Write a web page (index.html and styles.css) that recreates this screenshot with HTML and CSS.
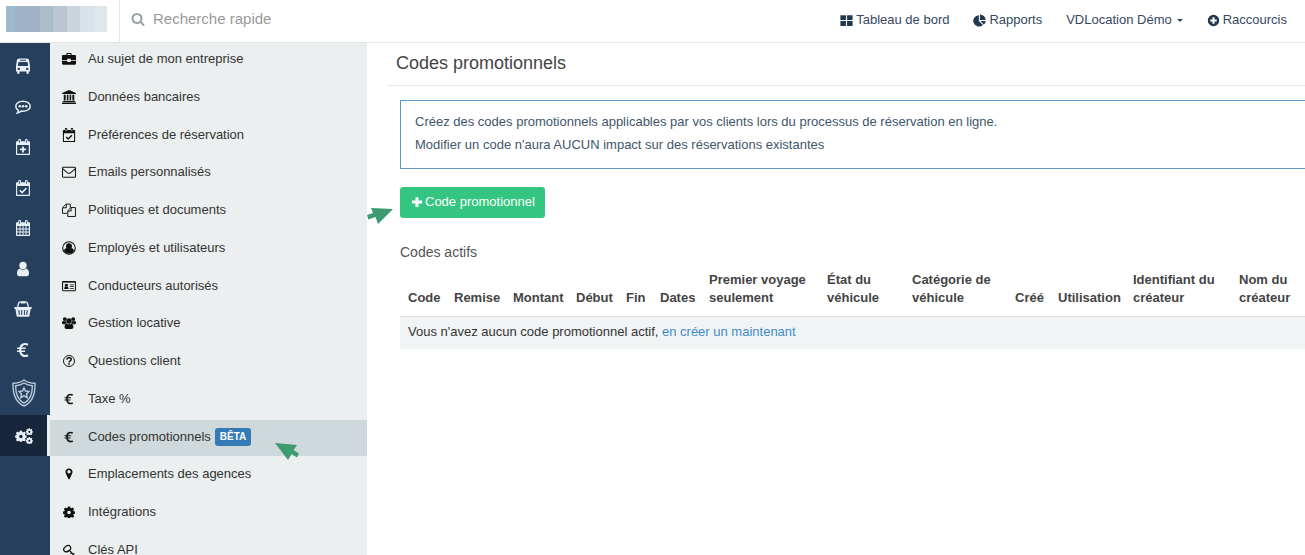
FILE: index.html
```html
<!DOCTYPE html>
<html lang="fr">
<head>
<meta charset="utf-8">
<title>Codes promotionnels</title>
<link rel="stylesheet" href="styles.css">
</head>
<body>
<svg class="sprite" aria-hidden="true">
  <symbol id="search" viewBox="0 0 1792 1792"><path d="M1216 832q0-185-131.500-316.500t-316.500-131.500-316.500 131.500-131.500 316.500 131.500 316.500 316.500 131.500 316.500-131.500 131.500-316.500zm512 832q0 52-38 90t-90 38q-54 0-90-38l-343-342q-179 124-399 124-143 0-273.500-55.500t-225-150-150-225-55.500-273.500 55.500-273.500 150-225 225-150 273.500-55.500 273.500 55.500 225 150 150 225 55.500 273.500q0 220-124 399l343 343q37 37 37 90z"/></symbol>
  <symbol id="grid" viewBox="0 0 16 16"><path d="M.5 1.500h6.800v6H.5zM8.700 1.500h6.800v6H8.700zM.5 8.700h6.800v6H.5zM8.700 8.700h6.800v6H8.700z"/></symbol>
  <symbol id="pie" viewBox="0 0 16 16"><path d="M7.200 1.500V8.500l5 5A7 7 0 1 1 7.200 1.500zM8.500.6a6.900 6.900 0 0 1 7 6.800h-7zM9.300 8.600h6.300a6.900 6.900 0 0 1-2.200 4.600z"/></symbol>
  <symbol id="pluscircle" viewBox="0 0 16 16"><path fill-rule="evenodd" d="M8 1a7 7 0 1 1 0 14A7 7 0 0 1 8 1zM6.700 4v2.700H4v2.600h2.700V12h2.600V9.300H12V6.700H9.300V4z"/></symbol>
  <symbol id="plus" viewBox="0 0 16 16"><path d="M6 1.500h4V6h4.700v4H10v4.700H6V10H1.300V6H6z"/></symbol>
  <symbol id="bus" viewBox="0 0 16 16"><path fill-rule="evenodd" d="M4.500.5h7c1.700 0 2.400.8 2.700 2.300L15 8v5.500h-1.200V15c0 1.300-2.300 1.300-2.300 0v-1.500h-7V15c0 1.300-2.300 1.300-2.300 0v-1.500H1V8l.8-5.200C2.100 1.300 2.800.5 4.500.5zM5 1.700v1h6v-1zM3.500 4l-.6 4h10.200l-.6-4zM3.800 9.700a1.200 1.200 0 1 0 0 2.400 1.200 1.200 0 0 0 0-2.400zM12.200 9.700a1.200 1.200 0 1 0 0 2.400 1.200 1.200 0 0 0 0-2.400z"/></symbol>
  <symbol id="comment" viewBox="0 0 16 16"><path fill="none" stroke="currentColor" stroke-width="1.500" d="M8 2.200c4 0 7.200 2.200 7.200 5s-3.200 5-7.200 5c-.6 0-1.200 0-1.700-.1-1.200 1-2.500 1.600-4 1.900.6-.8.900-1.600 1-2.600C1.700 10.500.8 9 .8 7.200c0-2.800 3.200-5 7.200-5z"/><circle cx="4.800" cy="7.200" r="1.300"/><circle cx="8" cy="7.200" r="1.300"/><circle cx="11.200" cy="7.200" r="1.300"/></symbol>
  <symbol id="calbase" viewBox="0 0 16 16"><path fill-rule="evenodd" d="M2 2.200h1.300V1c0-1.200 2.700-1.200 2.700 0v1.200h4V1c0-1.200 2.700-1.200 2.700 0v1.200H14c.6 0 1 .4 1 1V15c0 .6-.4 1-1 1H2c-.6 0-1-.4-1-1V3.200c0-.6.400-1 1-1zM2.200 6v8.800h11.600V6zM4.200 1.200v2.600h.9V1.200zM10.900 1.200v2.600h.9V1.200z"/></symbol>
  <symbol id="calplus" viewBox="0 0 16 16"><use href="#calbase"/><path d="M7.100 7.400h1.800v2.200h2.200v1.700H8.900v2.200H7.100v-2.200H4.900V9.600h2.200z"/></symbol>
  <symbol id="calcheck" viewBox="0 0 16 16"><use href="#calbase"/><path fill="none" stroke="currentColor" stroke-width="1.600" d="M4.800 10.300l2.300 2.300 4.200-4.300"/></symbol>
  <symbol id="cal" viewBox="0 0 16 16"><use href="#calbase"/><path fill="none" stroke="currentColor" d="M5 6v9M8 6v9M11 6v9M2 9h12M2 12h12"/></symbol>
  <symbol id="user" viewBox="0 0 16 16"><circle cx="8" cy="4.500" r="3.700"/><path d="M4.800 7.500c2 1.800 4.400 1.800 6.400 0 2 .5 2.800 2.500 2.800 5 0 1.700-.9 2.700-2.300 2.700H4.300C2.900 15.200 2 14.200 2 12.500c0-2.500.8-4.500 2.800-5z"/></symbol>
  <symbol id="basket" viewBox="0 0 18 16"><path fill="none" stroke="currentColor" stroke-width="1.300" d="M3.300 7l1.400-5c.2-.6.5-.8 1-.8h6.600c.5 0 .8.200 1 .8l1.400 5"/><path d="M6.800.3h4.400v2.200H6.800z"/><path fill-rule="evenodd" d="M.8 6h16.400c.8 0 .8 1.900 0 1.900h-.6L15.400 15c-.1.500-.4.800-.9.800h-11c-.5 0-.8-.3-.9-.8L1.400 7.900H.8c-.8 0-.8-1.900 0-1.900zM4.300 9l.5 5h1l-.4-5zM7.200 9v5h1V9zM9.900 9v5h1V9zM12.700 9l-.4 5h1l.5-5z"/></symbol>
  <symbol id="euro" viewBox="0 0 16 16"><path fill="none" stroke="currentColor" stroke-width="2.200" d="M13 2.800C8.800.700 5.200 3 5.200 8s3.600 7.300 7.800 5.200"/><path d="M2 5.500h9l-.4 1.600H2zM2 8.500h8.300L9.900 10.100H2z"/></symbol>
  <symbol id="shield" viewBox="0 0 24 28"><g fill="none" stroke="currentColor"><path stroke-width="1.400" d="M12 1c3 2.300 6.500 3.300 11 3.300C23.300 15 21 23 12 27 3 23 .7 15 1 4.300 5.500 4.300 9 3.300 12 1z"/><path stroke-width="1.400" d="M12 4c2.400 1.700 5 2.500 8.400 2.700C20.400 15 18.400 21 12 24.200 5.600 21 3.600 15 3.600 6.700 7 6.500 9.600 5.700 12 4z"/><path stroke-width="1.500" d="M12 9l1.500 3.100 3.400.5-2.400 2.400.6 3.500-3.100-1.700-3.100 1.700.6-3.500-2.400-2.400 3.400-.5z"/></g></symbol>
  <symbol id="cog" viewBox="0 0 16 16"><path fill-rule="evenodd" d="M6.500.5h3l.4 2.100 1.100.5 1.800-1.200 2.100 2.100-1.200 1.800.5 1.100 2 .4v2.900l-2 .5-.5 1.100 1.200 1.800-2.100 2.100-1.800-1.200-1.100.5-.4 2.100h-3L6.100 15 5 14.500l-1.800 1.200-2.100-2.100 1.200-1.800-.5-1.100-2-.5V7.300l2-.4.5-1.100L1.100 4l2.100-2.100L5 3.100l1.100-.5zM8 6.200a2.400 2.400 0 1 0 0 4.800 2.400 2.400 0 0 0 0-4.800z"/></symbol>
  <symbol id="cogs" viewBox="0 0 20 18"><use href="#cog" x="0" y="2.500" width="13" height="13"/><use href="#cog" x="12" y="0" width="8" height="8"/><use href="#cog" x="12" y="10" width="8" height="8"/></symbol>
  <symbol id="briefcase" viewBox="0 0 16 16"><path fill-rule="evenodd" d="M5 3.500V2.200C5 1.500 5.400 1 6.200 1h3.600c.8 0 1.200.5 1.200 1.200v1.300h3.700c.8 0 1.300.5 1.300 1.300V9h-6V7.800H6V9H0V4.800c0-.8.5-1.300 1.300-1.300zM6.200 2.200v1.300h3.600V2.200zM0 10h6v1.500h4V10h6v3.200c0 .8-.5 1.300-1.300 1.300H1.300C.5 14.500 0 14 0 13.200z"/></symbol>
  <symbol id="bank" viewBox="0 0 16 16"><path d="M8 0l8 3.500v1.200H0V3.500zM2 5.500h2.200V12H2zM5.500 5.500h1.800V12H5.500zM8.700 5.500h1.800V12H8.700zM11.800 5.500H14V12h-2.200zM1 12.500h14v1.200H1zM0 14.300h16V16H0z"/></symbol>
  <symbol id="mail" viewBox="0 0 16 16"><g fill="none" stroke="currentColor" stroke-width="1.150"><rect x=".6" y="2.600" width="14.800" height="11.400" rx="1"/><path d="M1 4.500l5.300 4.400c1.200.9 2.200.9 3.400 0L15 4.500"/></g></symbol>
  <symbol id="files" viewBox="0 0 16 16"><g fill="none" stroke="currentColor" stroke-width="1.100"><path d="M6 11.800H.6V5.300L4.700 1.200h4.700v4M4.900 1.200v4.300H.8M6.600 8.800l3.600-3.600h5.200v10.200H6.600zM10.400 5.200v4H6.800"/></g></symbol>
  <symbol id="usercircle" viewBox="0 0 16 16"><circle cx="8" cy="8" r="7.200" fill="none" stroke="currentColor" stroke-width="1.200"/><circle cx="8" cy="6" r="3.400"/><path d="M5 8c1.900 1.700 4.100 1.700 6 0 1.800.3 2.400 1.800 2.700 3.500A6.900 6.900 0 0 1 8 14.700a6.900 6.900 0 0 1-5.700-3.200C2.600 9.800 3.200 8.300 5 8z"/></symbol>
  <symbol id="idcard" viewBox="0 0 18 16"><rect x=".7" y="2.200" width="16.600" height="12" rx="1" fill="none" stroke="currentColor" stroke-width="1.300"/><path d="M.7 2h16.600v1.600H.7z"/><circle cx="5.600" cy="7" r="1.900"/><path d="M2.800 11.800c0-2 .8-3 1.600-3.200h2.400c.8.200 1.600 1.200 1.600 3.200zM10 6h5.300v1H10zM10 8.200h5.300v1H10zM10 10.500h5.300v1H10z"/></symbol>
  <symbol id="group" viewBox="0 0 18 16"><circle cx="3.600" cy="3" r="2.500"/><circle cx="14.400" cy="3" r="2.500"/><circle cx="9" cy="5.400" r="3.500"/><path d="M1.700 5.200c1 .8 2.300.9 3.400.4.100 1 .4 2 1.100 2.700-1 .1-1.800.5-2.400 1.200H1.600C.5 9.500 0 9 0 8 0 6.800.5 5.500 1.700 5.200zM16.300 5.200c-1 .8-2.300.9-3.400.4-.1 1-.4 2-1.100 2.700 1 .1 1.800.5 2.400 1.200h2.200c1.100 0 1.600-.5 1.600-1.500 0-1.200-.5-2.500-1.700-2.800zM6 8.600c1.900 1.500 4.100 1.500 6 0 2 .4 2.700 2.500 2.700 4.700 0 1.500-.9 2.500-2.300 2.500H5.600c-1.400 0-2.300-1-2.300-2.500 0-2.200.7-4.300 2.700-4.700z"/></symbol>
  <symbol id="question" viewBox="0 0 16 16"><g fill="none" stroke="currentColor"><circle cx="8" cy="8" r="6.300" stroke-width="1.100"/><path stroke-width="1.700" d="M5.500 6.400C5.700 5 6.700 4.400 8 4.400c1.500 0 2.600.8 2.600 2 0 1.600-2.500 1.600-2.500 3.300"/></g><path d="M7.200 10.700H9v1.600H7.200z"/></symbol>
  <symbol id="pin" viewBox="0 0 16 16"><path fill-rule="evenodd" d="M8 .5c2.800 0 4.700 2 4.700 4.600 0 1-.2 1.600-.5 2.200l-3.300 7.500c-.4.800-1.400.8-1.800 0L3.800 7.300c-.3-.6-.5-1.200-.5-2.200C3.300 2.500 5.200.5 8 .5zm0 2.300a2.300 2.300 0 1 0 0 4.600 2.300 2.300 0 0 0 0-4.600z"/></symbol>
  <symbol id="key" viewBox="0 0 16 16"><g fill="none" stroke="currentColor" stroke-width="1.700"><ellipse cx="5.600" cy="6.200" rx="5" ry="3.600" transform="rotate(-35 5.600 6.200)"/><path d="M8.200 8.200l5.600 5.600M10 13l2-2M12.500 15.200l2.700-2.700"/></g></symbol>
  <symbol id="arrow-left" viewBox="0 0 27 18"><path d="M0 0l22 2-3.500 5 5.500 3.500-2 4-5.500-3.500L13 17z"/></symbol>
  <symbol id="arrow-right" viewBox="0 0 27 18"><path d="M26 2L4 1l2 5-6 2 1.500 4.500 7-2.500L11 17z"/></symbol>
</svg>

<header class="topbar">
  <a class="brand" href="#" aria-label="Accueil"><span class="logo"><i></i><i></i><i></i><i></i><i></i><i></i><i></i></span></a>
  <label class="search"><svg class="icon"><use href="#search"/></svg><input type="search" placeholder="Recherche rapide" aria-label="Recherche rapide"></label>
  <nav class="topnav">
    <a href="#"><svg class="icon"><use href="#grid"/></svg>Tableau de bord</a>
    <a href="#"><svg class="icon"><use href="#pie"/></svg>Rapports</a>
    <button type="button">VDLocation Démo<span class="caret"></span></button>
    <a href="#"><svg class="icon"><use href="#pluscircle"/></svg>Raccourcis</a>
  </nav>
</header>

<div class="shell">
  <nav class="rail" aria-label="Navigation principale">
    <a href="#" aria-label="Véhicules"><svg class="icon"><use href="#bus"/></svg></a>
    <a href="#" aria-label="Messages"><svg class="icon"><use href="#comment"/></svg></a>
    <a href="#" aria-label="Nouvelle réservation"><svg class="icon"><use href="#calplus"/></svg></a>
    <a href="#" aria-label="Réservations"><svg class="icon"><use href="#calcheck"/></svg></a>
    <a href="#" aria-label="Calendrier"><svg class="icon"><use href="#cal"/></svg></a>
    <a href="#" aria-label="Clients"><svg class="icon"><use href="#user"/></svg></a>
    <a href="#" aria-label="Boutique"><svg class="icon wide"><use href="#basket"/></svg></a>
    <a href="#" aria-label="Finances"><svg class="icon"><use href="#euro"/></svg></a>
    <a href="#" class="protection" aria-label="Protection"><svg class="icon"><use href="#shield"/></svg></a>
    <a href="#" class="active" aria-label="Paramètres"><svg class="icon wide"><use href="#cogs"/></svg></a>
  </nav>

  <nav class="subnav" aria-label="Paramètres">
    <ul>
      <li><a href="#"><svg class="icon"><use href="#briefcase"/></svg>Au sujet de mon entreprise</a></li>
      <li><a href="#"><svg class="icon"><use href="#bank"/></svg>Données bancaires</a></li>
      <li><a href="#"><svg class="icon"><use href="#calcheck"/></svg>Préférences de réservation</a></li>
      <li><a href="#"><svg class="icon"><use href="#mail"/></svg>Emails personnalisés</a></li>
      <li><a href="#"><svg class="icon"><use href="#files"/></svg>Politiques et documents</a></li>
      <li><a href="#"><svg class="icon"><use href="#usercircle"/></svg>Employés et utilisateurs</a></li>
      <li><a href="#"><svg class="icon"><use href="#idcard"/></svg>Conducteurs autorisés</a></li>
      <li><a href="#"><svg class="icon"><use href="#group"/></svg>Gestion locative</a></li>
      <li><a href="#"><svg class="icon"><use href="#question"/></svg>Questions client</a></li>
      <li><a href="#"><svg class="icon small"><use href="#euro"/></svg>Taxe %</a></li>
      <li><a href="#" class="active"><svg class="icon small"><use href="#euro"/></svg>Codes promotionnels<span class="badge">BÊTA</span><svg class="pointer pointer-menu"><use href="#arrow-left"/></svg></a></li>
      <li><a href="#"><svg class="icon small"><use href="#pin"/></svg>Emplacements des agences</a></li>
      <li><a href="#"><svg class="icon small"><use href="#cog"/></svg>Intégrations</a></li>
      <li><a href="#"><svg class="icon small"><use href="#key"/></svg>Clés API</a></li>
    </ul>
  </nav>

  <main class="content">
    <h1>Codes promotionnels</h1>
    <div class="panel">
      <div class="info">
        <p>Créez des codes promotionnels applicables par vos clients lors du processus de réservation en ligne.</p>
        <p>Modifier un code n'aura AUCUN impact sur des réservations existantes</p>
      </div>
      <div class="actions">
        <button type="button" class="add"><svg class="icon"><use href="#plus"/></svg>Code promotionnel</button>
        <svg class="pointer pointer-button"><use href="#arrow-right"/></svg>
      </div>
      <h2>Codes actifs</h2>
      <table>
        <colgroup><col class="c-code"><col class="c-remise"><col class="c-montant"><col class="c-debut"><col class="c-fin"><col class="c-dates"><col class="c-voyage"><col class="c-etat"><col class="c-categorie"><col class="c-cree"><col class="c-usage"><col class="c-ident"><col></colgroup>
        <thead><tr><th>Code</th><th>Remise</th><th>Montant</th><th>Début</th><th>Fin</th><th>Dates</th><th>Premier voyage seulement</th><th>État du véhicule</th><th>Catégorie de véhicule</th><th>Créé</th><th>Utilisation</th><th>Identifiant du créateur</th><th>Nom du créateur</th></tr></thead>
        <tbody><tr><td colspan="13">Vous n'avez aucun code promotionnel actif, <a href="#">en créer un maintenant</a></td></tr></tbody>
      </table>
    </div>
  </main>
</div>
</body>
</html>
```
FILE: styles.css
```css
* { box-sizing: border-box; }
body {
  margin: 0;
  height: 100vh;
  overflow: hidden;
  display: flex;
  flex-direction: column;
  background: #fff;
  color: #333;
  font: 13px/18px "Liberation Sans", Arial, sans-serif;
}
a { color: inherit; text-decoration: none; }
button { font: inherit; border: 0; cursor: pointer; }
.sprite { display: none; }
.icon { width: 14px; height: 14px; flex: none; fill: currentColor; }

.topbar {
  display: flex;
  flex: none;
  height: 43px;
  border-bottom: 1px solid #e3e6e7;
}
.brand {
  width: 120px;
  padding: 6px;
  border-right: 1px solid #e3e6e7;
}
.logo { display: flex; width: 101px; height: 26px; }
.logo i { flex: 14; }
.logo i:nth-child(1) { flex: 8; background: #9dbad3; }
.logo i:nth-child(2) { flex: 27; background: #a1b3c7; }
.logo i:nth-child(3) { background: #adbccb; }
.logo i:nth-child(4) { background: #bcc6d2; }
.logo i:nth-child(5) { background: #ccd5de; }
.logo i:nth-child(6) { background: #d9e2e8; }
.logo i:nth-child(7) { background: #dee7ec; }
.search {
  display: flex;
  flex: 1;
  align-items: center;
  gap: 8px;
  padding: 0 12px 4px 11px;
  color: #95a3aa;
}
.search input {
  flex: 1;
  padding: 0;
  border: 0;
  outline: 0;
  background: none;
  font: inherit;
  font-size: 15px;
}
.search input::placeholder { color: #999; opacity: 1; }
.topnav {
  display: flex;
  align-items: center;
  gap: 24px;
  padding: 0 18px 2px 0;
  color: #34495e;
}
.topnav a, .topnav button {
  display: flex;
  align-items: center;
  gap: 3px;
  padding: 0;
  background: none;
  color: inherit;
}
.topnav .icon { width: 13px; height: 13px; color: #22384f; }
.caret {
  margin-left: 2px;
  border: 3px solid transparent;
  border-top-color: currentColor;
  border-bottom: 0;
}

.shell { display: flex; flex: 1; min-height: 0; }
.rail {
  width: 50px;
  flex: none;
  padding-top: 3px;
  background: #263f5d;
  color: #e8eff6;
}
.rail a {
  display: flex;
  align-items: center;
  justify-content: center;
  height: 40px;
  padding-right: 4px;
}
.rail a:nth-child(even) { height: 41px; }
.rail .icon { width: 16px; height: 16px; }
.rail .wide { width: 18px; }
.rail .protection { height: 45px; padding-right: 2px; }
.rail .protection .icon { width: 24px; height: 28px; color: #b9cbdc; }
.rail .active {
  height: 40px;
  padding-right: 0;
  border-right: 3px solid #ebeff0;
  background: #17263a;
}

.subnav {
  width: 317px;
  flex: none;
  overflow: hidden;
  background: #ebefef;
  color: #333;
}
.subnav ul { margin: -1px 0 0; padding: 0; list-style: none; }
.subnav li { height: 38px; }
.subnav li:nth-child(4n+3) { height: 37px; }
.subnav a {
  position: relative;
  display: flex;
  align-items: center;
  height: 36px;
  padding: 0 12px 2px;
}
.subnav .icon { margin-right: 12px; color: #111; }
.subnav .small { width: 12px; height: 12px; margin: 0 13px 0 1px; }
.subnav .active { background: #cfd8da; }
.badge {
  margin-left: 4px;
  padding: 0 5px;
  border-radius: 3px;
  background: #337ab7;
  color: #fff;
  font-size: 10px;
  font-weight: bold;
}

.content { flex: 1; min-width: 0; padding-left: 21px; }
h1 {
  margin: 0;
  padding: 7px 8px 9px;
  border-bottom: 1px solid #e3e6e7;
  color: #444;
  font-size: 18px;
  font-weight: normal;
  line-height: 26px;
}
.panel { padding: 14px 0 0 12px; }
.info {
  padding: 9px 14px 12px;
  border: 1px solid #5b9bc8;
  border-right: 0;
  color: #41566b;
}
.info p { margin: 0; line-height: 23px; }
.actions { position: relative; display: flex; margin: 18px 0 24px; }
.add {
  display: flex;
  align-items: center;
  gap: 2px;
  height: 31px;
  padding: 0 10px 2px 11px;
  border-radius: 3px;
  background: #34c680;
  color: #fff;
}
.add .icon { width: 12px; height: 12px; }
h2 {
  margin: 0 0 9px;
  color: #555;
  font-size: 14px;
  font-weight: normal;
  line-height: 20px;
}
table { width: 100%; table-layout: fixed; border-collapse: collapse; }
th {
  padding: 0 4px 9px 8px;
  border-bottom: 1px solid #ddd;
  color: #444;
  text-align: left;
  vertical-align: bottom;
}
td { padding: 6px 8px 8px; background: #f1f4f5; }
td a { color: #428bca; }
.c-code { width: 46px; }
.c-remise { width: 59px; }
.c-montant { width: 63px; }
.c-debut { width: 50px; }
.c-fin { width: 34px; }
.c-dates { width: 49px; }
.c-voyage { width: 118px; }
.c-etat { width: 85px; }
.c-categorie { width: 103px; }
.c-cree { width: 43px; }
.c-usage { width: 75px; }
.c-ident { width: 106px; }

.pointer {
  position: absolute;
  width: 27px;
  height: 18px;
  fill: #3d9b70;
}
.pointer-menu { top: 23px; left: 225px; }
.pointer-button { top: 20px; left: -33px; }
```
